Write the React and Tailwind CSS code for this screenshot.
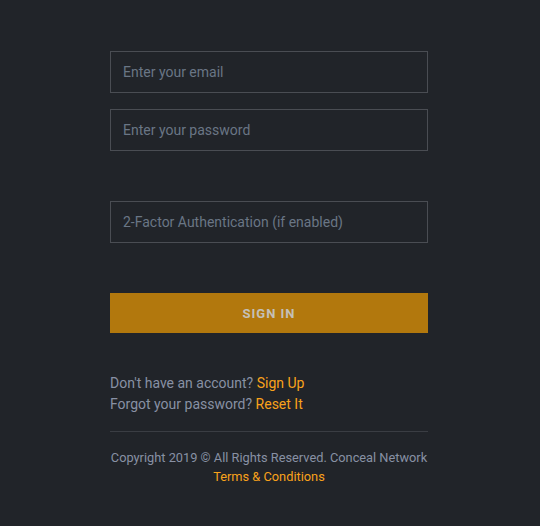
export default function App() {
  return (
    <main
      className="min-h-[526px] w-full bg-[#212429] pt-[51px] text-[14px]"
      style={{ fontFamily: 'Roboto, "Liberation Sans", sans-serif' }}
    >
      <form className="ml-[110px] w-[318px]" onSubmit={(e) => e.preventDefault()}>
        <input
          type="email"
          placeholder="Enter your email"
          className="block h-[42px] w-full border border-[#4a4d53] bg-transparent px-[12px] text-[14px] text-[#9aa3b3] placeholder:text-[#6a7685] outline-none"
        />
        <input
          type="password"
          placeholder="Enter your password"
          className="mt-[16px] block h-[42px] w-full border border-[#4a4d53] bg-transparent px-[12px] text-[14px] text-[#9aa3b3] placeholder:text-[#6a7685] outline-none"
        />
        <input
          type="text"
          placeholder="2-Factor Authentication (if enabled)"
          className="mt-[50px] block h-[42px] w-full border border-[#4a4d53] bg-transparent px-[12px] text-[14px] text-[#9aa3b3] placeholder:text-[#6a7685] outline-none"
        />
        <button
          type="submit"
          className="mt-[50px] block h-[40px] w-full bg-[#b2780d] pt-[1px] text-[13px] font-bold tracking-[1px] text-[#c4c0b8]"
        >
          SIGN IN
        </button>

        <div className="mt-[40px] leading-[21px] text-[#8891a4]">
          <p>
            Don't have an account? <a className="text-[#f9a21b]">Sign Up</a>
          </p>
          <p>
            Forgot your password? <a className="text-[#f9a21b]">Reset It</a>
          </p>
        </div>

        <hr className="mt-[16px] border-0 border-t border-[#3a3d43]" />

        <div className="mt-[16px] flex flex-col items-center text-[12.8px] leading-[19px] text-[#8891a4]">
          <p className="whitespace-nowrap">Copyright 2019 © All Rights Reserved. Conceal Network</p>
          <p>
            <a className="text-[#f9a21b]">Terms &amp; Conditions</a>
          </p>
        </div>
      </form>
    </main>
  )
}
